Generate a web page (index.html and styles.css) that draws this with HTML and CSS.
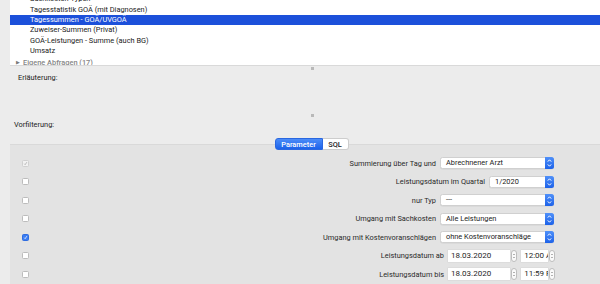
FILE: index.html
```html
<!DOCTYPE html>
<html lang="de">
<head>
    <meta charset="UTF-8">
    <meta name="viewport" content="width=device-width, initial-scale=1.0">
    <title>Abfragen</title>
    <link rel="stylesheet" href="styles.css">
</head>
<body>
    <div class="list">
        <div class="rows">
            <div class="item">Sachkosten-Typen</div>
            <div class="item">Tagesstatistik GOÄ (mit Diagnosen)</div>
            <div class="item selected">Tagessummen - GOÄ/UVGOÄ</div>
            <div class="item">Zuweiser-Summen (Privat)</div>
            <div class="item">GOÄ-Leistungen - Summe (auch BG)</div>
            <div class="item">Umsatz</div>
            <div class="group"><span class="tri">▶</span>Eigene Abfragen (17)</div>
        </div>
    </div>

    <div class="split"><span class="grip"></span></div>
    <div class="notes">Erläuterung:</div>
    <div class="split"><span class="grip"></span></div>
    <div class="filter-label">Vorfilterung:</div>

    <div class="tabs">
        <span class="tab active">Parameter</span><span class="tab">SQL</span>
    </div>

    <div class="panel">
        <div class="row">
            <span class="check disabled on"><svg viewBox="0 0 8 8"><path d="M2 4.3l1.4 1.6L6.2 1.8"/></svg></span>
            <span class="label">Summierung über Tag und</span>
            <span class="select"><span class="value">Abrechnener Arzt</span><span class="arrows"><svg viewBox="0 0 8 12"><path d="M2.3 4.6L4 2.8l1.7 1.8M2.3 7.4L4 9.2l1.7-1.8"/></svg></span></span>
        </div>
        <div class="row">
            <span class="check"></span>
            <span class="label">Leistungsdatum im Quartal</span>
            <span class="select short"><span class="value">1/2020</span><span class="arrows"><svg viewBox="0 0 8 12"><path d="M2.3 4.6L4 2.8l1.7 1.8M2.3 7.4L4 9.2l1.7-1.8"/></svg></span></span>
        </div>
        <div class="row">
            <span class="check"></span>
            <span class="label">nur Typ</span>
            <span class="select"><span class="value">---</span><span class="arrows"><svg viewBox="0 0 8 12"><path d="M2.3 4.6L4 2.8l1.7 1.8M2.3 7.4L4 9.2l1.7-1.8"/></svg></span></span>
        </div>
        <div class="row">
            <span class="check"></span>
            <span class="label">Umgang mit Sachkosten</span>
            <span class="select"><span class="value">Alle Leistungen</span><span class="arrows"><svg viewBox="0 0 8 12"><path d="M2.3 4.6L4 2.8l1.7 1.8M2.3 7.4L4 9.2l1.7-1.8"/></svg></span></span>
        </div>
        <div class="row">
            <span class="check on"><svg viewBox="0 0 8 8"><path d="M2 4.3l1.4 1.6L6.2 1.8"/></svg></span>
            <span class="label">Umgang mit Kostenvoranschlägen</span>
            <span class="select"><span class="value">ohne Kostenvoranschläge</span><span class="arrows"><svg viewBox="0 0 8 12"><path d="M2.3 4.6L4 2.8l1.7 1.8M2.3 7.4L4 9.2l1.7-1.8"/></svg></span></span>
        </div>
        <div class="row">
            <span class="check"></span>
            <span class="label">Leistungsdatum ab</span>
            <span class="datetime">
                <span class="field date">18.03.2020</span><span class="stepper"><svg viewBox="0 0 6 12"><path d="M1.6 4.4L3 3l1.4 1.4M1.6 7.6L3 9l1.4-1.4"/></svg></span>
                <span class="field time">12:00 AM</span><span class="stepper"><svg viewBox="0 0 6 12"><path d="M1.6 4.4L3 3l1.4 1.4M1.6 7.6L3 9l1.4-1.4"/></svg></span>
            </span>
        </div>
        <div class="row">
            <span class="check"></span>
            <span class="label">Leistungsdatum bis</span>
            <span class="datetime">
                <span class="field date">18.03.2020</span><span class="stepper"><svg viewBox="0 0 6 12"><path d="M1.6 4.4L3 3l1.4 1.4M1.6 7.6L3 9l1.4-1.4"/></svg></span>
                <span class="field time">11:59 PM</span><span class="stepper"><svg viewBox="0 0 6 12"><path d="M1.6 4.4L3 3l1.4 1.4M1.6 7.6L3 9l1.4-1.4"/></svg></span>
            </span>
        </div>
    </div>
</body>
</html>
```

FILE: styles.css
```css
html, body {margin: 0; height: 100%; overflow: hidden;}
body {font-family: Roboto, "Liberation Sans", sans-serif; font-size: 7.4px; color: #222; background: #ececec;}

.list {margin-left: 10px; height: 66px; overflow: hidden; background: #fff; border-bottom: 1px solid #d9d9d9; box-sizing: border-box;}
.rows {margin-top: -5.7px;}
.item {height: 10.4px; line-height: 10.4px; padding-left: 20px; white-space: nowrap;}
.item.selected {background: #1c50da; color: #fff;}
.group {height: 10.4px; line-height: 10.4px; padding-left: 6px; color: #858585; font-weight: 500;}
.tri {font-size: 5px; margin-right: 3px; vertical-align: 1px; color: #7a7a7a;}

.split {height: 4px; display: flex; justify-content: center; align-items: center;}
.grip {width: 3px; height: 3px; background: #b9b9b9; margin-left: 24px;}

.notes {height: 43px; box-sizing: border-box; padding: 3px 0 0 18px; line-height: 10px;}
.filter-label {height: 21px; box-sizing: border-box; padding: 3px 0 0 14px; line-height: 10px;}

.tabs {height: 12px; display: flex; justify-content: center; margin-bottom: -6px; position: relative; z-index: 1; padding-left: 23px;}
.tab {height: 12px; line-height: 11px; font-weight: 500; background: #fff; border: 1px solid #cdcdcd; border-left: 0; border-radius: 0 3px 3px 0; box-sizing: border-box; width: 26px; text-align: center;}
.tab.active {background: linear-gradient(#4b8cf8, #1c62ea); color: #fff; border: 1px solid #2a67e0; border-radius: 3px 0 0 3px; width: 48px;}

.panel {margin-left: 10px; height: 140px; box-sizing: border-box; background: #e3e3e3; border-top: 1px solid #d9d9d9; padding: 8.75px 46px 0 12px;}
.row {height: 18.5px; display: flex; align-items: center; gap: 4px;}
.label {margin-left: auto; white-space: nowrap; color: #2a2a2a;}

.check {width: 7px; height: 7px; box-sizing: border-box; border: 1px solid #bcbcbc; border-radius: 1.5px; background: #fff; display: flex;}
.check svg {width: 100%; height: 100%; fill: none; stroke-width: 1.2;}
.check.on {background: #3b7df2; border-color: #2e6ce0;}
.check.on svg {stroke: #fff;}
.check.disabled {background: #f2f2f2; border-color: #d0d0d0;}
.check.disabled svg {stroke: #a8a8a8;}

.select {width: 114px; height: 12px; box-sizing: border-box; display: flex; background: #fff; border: 1px solid #d0d0d0; border-radius: 2.5px; box-shadow: 0 0.5px 0.5px rgba(0,0,0,0.08);}
.select.short {width: 65px;}
.value {flex: 1; padding-left: 5px; line-height: 10px; white-space: nowrap; overflow: hidden; color: #222;}
.arrows {width: 9px; margin: -1px -1px -1px 0; border-radius: 0 2.5px 2.5px 0; background: linear-gradient(#4f90f9, #1d62e9); display: flex;}
.arrows svg {width: 100%; height: 100%; fill: none; stroke: #fff; stroke-width: 1;}

.datetime {display: flex; align-items: center; width: 107px; margin-right: -1px;}
.field {height: 12px; line-height: 12px; background: #fff; box-shadow: 0 0 0 0.5px #d6d6d6; font-size: 8px; padding-left: 3px; box-sizing: border-box; white-space: nowrap; overflow: hidden; color: #1e1e1e;}
.field.date {width: 62px;}
.field.time {width: 27px; margin-left: 4.5px;}
.stepper {width: 6px; height: 12px; margin-left: 1px; box-sizing: border-box; border: 0.5px solid #bdbdbd; border-radius: 3px; background: #fafafa; display: flex;}
.stepper svg {width: 100%; height: 100%; fill: none; stroke: #777; stroke-width: 0.9;}
```
